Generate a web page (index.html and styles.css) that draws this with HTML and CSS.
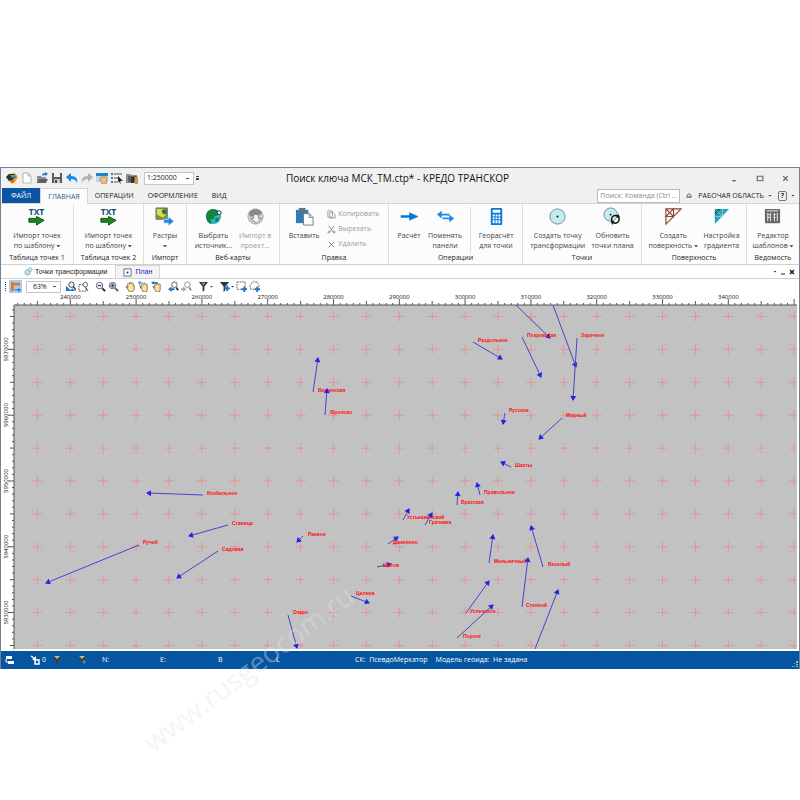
FILE: index.html
```
<!DOCTYPE html>
<html lang="ru">
    <head>
        <meta charset="UTF-8" />
        <meta name="viewport" content="width=device-width, initial-scale=1.0" />
        <title>Поиск ключа МСК_ТМ.ctp* - КРЕДО ТРАНСКОР</title>
        <link rel="stylesheet" href="styles.css">
    </head>
    <body>
        <div class="window">
            <header class="titlebar">
                <div class="quick">
                    <button class="tool" aria-label="Меню программы"><svg viewBox="0 0 12 12"><path d="M0 5l3-3 6-1 3 4-3 5-3 2-3-3z" fill="#f2a01d"/><path d="M0 5l3-3 5 0 2 3-4 3-3 1z" fill="#27343d"/><path d="M4 3h4l2 2-4 1z" fill="#4d9bb9"/><path d="M5 9l3-1-1 3z" fill="#d23b1c"/></svg></button>
                    <button class="tool" aria-label="Создать"><svg viewBox="0 0 12 12"><path d="M2 1h5l3 3v7H2zM7 1v3h3" fill="#fff" stroke="#b5b5b5"/></svg></button>
                    <button class="tool" aria-label="Открыть"><svg viewBox="0 0 12 12"><path d="M1 4h4l1 1h4v6H1z" fill="#8b8f91"/><path d="M3 7h9l-2 4H1z" fill="#5d6265"/><path d="M6 4c0-2 1-3 3-3V0l3 2-3 2V3c-1 0-2 0-3 1z" fill="#0c7bd8"/></svg></button>
                    <button class="tool" aria-label="Сохранить"><svg viewBox="0 0 12 12"><path d="M1 1h10v10H1z" fill="#555d61"/><path d="M3 1h6v4H3z" fill="#eef2f4"/><path d="M3 7h6v4H3z" fill="#c6cbce"/><path d="M4 8h2v3H4z" fill="#444"/></svg></button>
                    <button class="tool" aria-label="Отменить"><svg viewBox="0 0 12 12"><path d="M0 5l5-4v3c5 0 7 3 6 7-1-3-3-4-6-4v3z" fill="#1688e8"/></svg></button>
                    <button class="tool" aria-label="Вернуть"><svg viewBox="0 0 12 12"><path d="M12 5L7 1v3C2 4 0 7 1 11c1-3 3-4 6-4v3z" fill="#aeb3b6"/></svg></button>
                    <button class="tool" aria-label="Свойства"><svg viewBox="0 0 12 12"><path d="M0 1h12v9H0z" fill="#b9d9ef"/><path d="M0 1h12v3H0z" fill="#1c86ca"/><path d="M5 5h6v4l-1 3H6L4 8z" fill="#f3bd80" stroke="#a76e3a" stroke-width=".6"/></svg></button>
                    <button class="tool" aria-label="Список"><svg viewBox="0 0 12 12"><path d="M0 1h2v2H0zM0 5h2v2H0zM0 9h2v2H0z" fill="#1c86ca"/><path d="M3 2h8M3 6h5M3 10h4" stroke="#555"/><path d="M7 4l5 5H9l1 3-3-3z" fill="#222"/></svg></button>
                    <button class="tool" aria-label="Архив"><svg viewBox="0 0 12 12"><path d="M0 2h4l1 1h6v8H0z" fill="#8a8f92"/><path d="M2 4h9v6H2z" fill="#5c6266"/><path d="M5 5h3v6H5z" fill="#333"/><path d="M9 5h3v7H9z" fill="#cf9d38"/></svg></button>
                    <select class="scale" aria-label="Масштаб"><option>1:250000</option></select>
                    <span class="more"></span>
                </div>
                <h1>Поиск ключа МСК_ТМ.ctp* - КРЕДО ТРАНСКОР</h1>
                <div class="win-buttons">
                    <button aria-label="Свернуть"><svg viewBox="0 0 8 8"><path d="M3 6h3" stroke="#444"/></svg></button>
                    <button aria-label="Развернуть"><svg viewBox="0 0 8 8"><path d="M2 2h5v4H2z" fill="none" stroke="#666"/></svg></button>
                    <button aria-label="Закрыть"><svg viewBox="0 0 8 8"><path d="M2 2l4 4M6 2L2 6" stroke="#666"/></svg></button>
                </div>
            </header>

            <nav class="tabs">
                <button class="file">ФАЙЛ</button>
                <button class="active">ГЛАВНАЯ</button>
                <button>ОПЕРАЦИИ</button>
                <button>ОФОРМЛЕНИЕ</button>
                <button>ВИД</button>
                <div class="tabs-right">
                    <input type="text" placeholder="Поиск: Команда (Ctrl ..." aria-label="Поиск команды">
                    <svg class="pin" viewBox="0 0 6 6"><path d="M1 4V3l1-2h2l1 2v1zM0 4h6" fill="none" stroke="#777"/></svg>
                    <button class="area">РАБОЧАЯ ОБЛАСТЬ<i class="arrow"></i></button>
                    <button class="help"><b>?</b><i class="arrow"></i></button>
                </div>
            </nav>

            <div class="ribbon">
                <section class="group">
                    <div class="items">
                        <button class="big"><svg viewBox="0 0 20 20"><text x="10" y="8" class="txt">TXT</text><path d="M2 12h8v-2l8 4-8 5v-3H2z" fill="#1c8a1c" stroke="#0c5212"/></svg><span>Импорт точек<br>по шаблону <i class="arrow"></i></span></button>
                    </div>
                    <h2>Таблица точек 1</h2>
                </section>
                <section class="group">
                    <div class="items">
                        <button class="big"><svg viewBox="0 0 20 20"><text x="10" y="8" class="txt">TXT</text><path d="M2 12h8v-2l8 4-8 5v-3H2z" fill="#1c8a1c" stroke="#0c5212"/></svg><span>Импорт точек<br>по шаблону <i class="arrow"></i></span></button>
                    </div>
                    <h2>Таблица точек 2</h2>
                </section>
                <section class="group">
                    <div class="items">
                        <button class="big"><svg viewBox="0 0 20 20"><path d="M1 1h12v12H1z" fill="#6f9b3b" stroke="#678"/><path d="M2 2h7l3 6-4 3-6-3z" fill="#e7d74b"/><path d="M7 3h5v5L8 7z" fill="#2f6d45"/><path d="M9 13h5v-3l6 5-6 5v-3H9z" fill="#1f86ee" stroke="#fff" stroke-width=".6"/></svg><span>Растры<br><i class="arrow"></i></span></button>
                    </div>
                    <h2>Импорт</h2>
                </section>
                <section class="group">
                    <div class="items">
                        <button class="big"><svg viewBox="0 0 20 20"><circle cx="10" cy="10" r="8" fill="#26b5d8"/><path d="M3 6c3-5 9-5 12-1l-1 4-3 1-1 3-3 0 1 5c-5-1-7-7-5-12z" fill="#148534"/><path d="M12 12l4-1-1 4-3 1z" fill="#148534"/><circle cx="16" cy="6" r="2" fill="#fff" stroke="#222"/></svg><span>Выбрать<br>источник...</span></button>
                        <button class="big" disabled><svg viewBox="0 0 20 20"><circle cx="10" cy="10" r="8" fill="#d0d0d0" stroke="#a5a5a5"/><path d="M3 6c3-5 11-5 14 0l-4 4H4z" fill="#8a8a8a"/><path d="M8 8h5v4h3l-5 5-6-5h3z" fill="#f8f8f8" stroke="#888"/></svg><span>Импорт в<br>проект...</span></button>
                    </div>
                    <h2>Веб-карты</h2>
                </section>
                <section class="group">
                    <div class="items">
                        <button class="big"><svg viewBox="0 0 20 20"><path d="M1 3h13v14H1z" fill="#2f7db5"/><path d="M4 1h7v4H4z" fill="#66737b"/><path d="M9 7h6l4 4v8H9zM15 7v4h4" fill="#fff" stroke="#707b82"/></svg><span>Вставить</span></button>
                        <div class="stack">
                            <button disabled><svg viewBox="0 0 10 10"><path d="M1 1h5v7H1zM3 3h4l2 2v4H3z" fill="#fff" stroke="#999"/></svg>Копировать</button>
                            <button disabled><svg viewBox="0 0 10 10"><path d="M2 1l5 7M8 1L3 8" stroke="#888"/><circle cx="2" cy="8" r="1" fill="none" stroke="#888"/><circle cx="8" cy="8" r="1" fill="none" stroke="#888"/></svg>Вырезать</button>
                            <button disabled><svg viewBox="0 0 10 10"><path d="M2 2l6 6M8 2L2 8" stroke="#777"/></svg>Удалить</button>
                        </div>
                    </div>
                    <h2>Правка</h2>
                </section>
                <section class="group">
                    <div class="items">
                        <button class="big"><svg viewBox="0 0 20 20"><path d="M1 9h9V6l9 4-9 4v-3H1z" fill="#0878d8" stroke="#0878d8" stroke-width=".6"/></svg><span>Расчёт</span></button>
                        <button class="big"><svg viewBox="0 0 20 20"><path d="M1 8l5-4v3h8v2H6v3zM19 12l-5-4v3H7v2h7v3z" fill="#1688ec"/></svg><span>Поменять<br>панели</span></button>
                        <button class="big divided"><svg viewBox="0 0 20 20"><rect x="4" y="1" width="12" height="18" rx="1" fill="#0878d8"/><path d="M6 3h8v3H6zM6 8h2v2H6zM9 8h2v2H9zM12 8h2v2h-2zM6 11h2v2H6zM9 11h2v2H9zM12 11h2v2h-2zM6 14h2v3H6zM9 14h2v3H9zM12 14h2v3h-2z" fill="#fff"/></svg><span>Георасчёт<br>для точки</span></button>
                    </div>
                    <h2>Операции</h2>
                </section>
                <section class="group">
                    <div class="items">
                        <button class="big"><svg viewBox="0 0 20 20"><circle cx="10" cy="10" r="8" fill="#c3e9f1" stroke="#6d8b93"/><circle cx="10" cy="10" r="1" fill="#111"/></svg><span>Создать точку<br>трансформации</span></button>
                        <button class="big"><svg viewBox="0 0 20 20"><circle cx="8" cy="8" r="7" fill="#c3e9f1" stroke="#6d8b93"/><circle cx="8" cy="8" r="1" fill="#111"/><circle cx="13" cy="13" r="4" fill="none" stroke="#111" stroke-width="1.6"/><path d="M16 7l2 4h-4zM10 19l-2-4h4z" fill="#111"/></svg><span>Обновить<br>точки плана</span></button>
                    </div>
                    <h2>Точки</h2>
                </section>
                <section class="group">
                    <div class="items">
                        <button class="big"><svg viewBox="0 0 20 20"><path d="M2 2h16L2 18zM2 2l8 8V2L2 10h8" fill="none" stroke="#8a4a2c" stroke-width="1.2"/></svg><span>Создать<br>поверхность <i class="arrow"></i></span></button>
                        <button class="big"><svg viewBox="0 0 20 20"><path d="M3 2h15L3 18z" fill="#22a7b8"/><path d="M3 2h8L3 12z" fill="#0d7487"/><path d="M3 2l8 8V2L3 10h7" fill="none" stroke="#a8e4ea" stroke-width=".7"/></svg><span>Настройка<br>градиента</span></button>
                    </div>
                    <h2>Поверхность</h2>
                </section>
                <section class="group">
                    <div class="items">
                        <button class="big"><svg viewBox="0 0 20 20"><rect x="2" y="2" width="16" height="15" rx="1" fill="#666"/><path d="M4 4h12M5 6v9M8 6v9M12 6v9M15 6v9" stroke="#eee"/><path d="M5 8h2M5 11h2M11 8h2M11 11h2" stroke="#fff"/></svg><span>Редактор<br>шаблонов <i class="arrow"></i></span></button>
                    </div>
                    <h2>Ведомость</h2>
                </section>
            </div>

            <div class="docs">
                <button><svg viewBox="0 0 10 10"><circle cx="4" cy="6" r="3" fill="#bfe1e5" stroke="#8ab"/><circle cx="7" cy="3" r="2" fill="#d7eef0" stroke="#8ab"/></svg>Точки трансформации</button>
                <button class="active"><svg viewBox="0 0 10 10"><path d="M1 1h8v8H1z" fill="#fff" stroke="#456b9b"/><path d="M4 4h2v2H4z" fill="#234"/></svg>План</button>
                <div class="docs-right">
                    <i class="arrow"></i>
                    <svg viewBox="0 0 6 6"><path d="M1 5h4" stroke="#222"/></svg>
                    <svg viewBox="0 0 6 6"><path d="M1 1l4 4M5 1L1 5" stroke="#111" stroke-width="1.4"/></svg>
                </div>
            </div>

            <div class="toolbar">
                <span class="grip"></span>
                <button class="tool on" aria-label="Слои"><svg viewBox="0 0 12 12"><path d="M1 1h3v10H1z" fill="#e2761b"/><path d="M4 2h7v3H4zM5 8h3" fill="#e2761b"/><path d="M5 9h4V7l3 3-3 2v-2H5z" fill="#1c76cf"/></svg></button>
                <select class="zoom" aria-label="Увеличение"><option>63%</option></select>
                <button class="tool" aria-label="Показать всё"><svg viewBox="0 0 12 12"><path d="M1 5v6h10L8 8l-2 2-3-3z" fill="#1c76cf"/><circle cx="7" cy="4" r="3" fill="#e4f1f8" stroke="#444"/><path d="M9 6l3 4" stroke="#333" stroke-width="1.5"/></svg></button>
                <button class="tool" aria-label="Рамкой"><svg viewBox="0 0 12 12"><path d="M1 4h8v7H1z" fill="none" stroke="#444" stroke-dasharray="2 1"/><circle cx="8" cy="4" r="2.5" fill="#fff" stroke="#555"/><path d="M8 7l3 4" stroke="#333"/></svg></button>
                <button class="tool gap" aria-label="Уменьшить"><svg viewBox="0 0 12 12"><circle cx="5" cy="5" r="3.5" fill="#fff" stroke="#555"/><path d="M3 5h4" stroke="#33a" stroke-width="1.5"/><path d="M8 8l3 3" stroke="#222" stroke-width="2"/></svg></button>
                <button class="tool" aria-label="Увеличить"><svg viewBox="0 0 12 12"><circle cx="5" cy="5" r="3.5" fill="#b9cbd8" stroke="#666"/><path d="M3 5h4M5 3v4" stroke="#357" stroke-width="1.5"/><path d="M8 8l3 3" stroke="#555" stroke-width="2"/></svg></button>
                <button class="tool gap" aria-label="Рука"><svg viewBox="0 0 12 12"><path d="M1 6l2 1V3l1-1 1 1 1-2 1 2 1-1 1 1v2l1 0v4l-2 3H5z" fill="#ffe2a0" stroke="#5c4a25" stroke-width=".8"/></svg></button>
                <button class="tool" aria-label="Сдвиг"><svg viewBox="0 0 12 12"><path d="M2 6l2 1V4l1-1 1 1 1-2 1 2 1-1 1 1v6l-1 2H6z" fill="#ffe2a0" stroke="#5c4a25" stroke-width=".8"/><path d="M0 2h5M2 0v5" stroke="#1c76cf"/></svg></button>
                <button class="tool" aria-label="Назад"><svg viewBox="0 0 12 12"><path d="M2 6l2 1V4l1-1 1 1 1-2 1 2 1-1 1 1v6l-1 2H6z" fill="#ffe2a0" stroke="#5c4a25" stroke-width=".8"/><path d="M0 2l3-2v1h4v2H3v1z" fill="#1c76cf"/></svg></button>
                <button class="tool gap" aria-label="Предыдущий вид"><svg viewBox="0 0 12 12"><circle cx="7" cy="4" r="3" fill="#fff" stroke="#555"/><path d="M9 7l2 3" stroke="#333" stroke-width="2"/><path d="M0 9l4-3v2h3v2H4v2z" fill="#1c76cf"/></svg></button>
                <button class="tool" aria-label="Следующий вид"><svg viewBox="0 0 12 12"><circle cx="7" cy="4" r="3" fill="#fff" stroke="#888"/><path d="M9 7l2 3" stroke="#888" stroke-width="2"/><path d="M6 9L2 6v2H0v2h2v2z" fill="#aaa"/></svg></button>
                <button class="tool wide gap" aria-label="Фильтр"><svg viewBox="0 0 12 12"><path d="M1 1h10L7 6v4l-2 2V6z" fill="#333"/><path d="M4 2h4L6 5z" fill="#999"/></svg><i class="arrow"></i></button>
                <button class="tool wide gap" aria-label="Добавить фильтр"><svg viewBox="0 0 12 12"><path d="M1 1h10L7 6v4l-2 2V6z" fill="#333"/><path d="M9 5v6M6 8h6" stroke="#1c76cf" stroke-width="2"/></svg><i class="arrow"></i></button>
                <button class="tool" aria-label="Выделить рамкой"><svg viewBox="0 0 12 12"><path d="M1 1h9v8H1z" fill="none" stroke="#555" stroke-dasharray="2 1"/><path d="M9 6v6M6 9h6" stroke="#1c76cf" stroke-width="2"/></svg></button>
                <button class="tool" aria-label="Выделить контуром"><svg viewBox="0 0 12 12"><path d="M2 9L1 5l3-4h5l2 4-1 4z" fill="none" stroke="#555" stroke-dasharray="2 1"/><path d="M9 6v6M6 9h6" stroke="#1c76cf" stroke-width="2"/></svg></button>
            </div>

            <svg class="plan" id="plan"></svg>

            <footer class="status">
                <svg viewBox="0 0 10 10"><path d="M1 1h6v3H1zM3 6h6v3H3z" fill="#fff"/><path d="M1 4v3h2" fill="none" stroke="#fff"/></svg>
                <span class="count"><svg viewBox="0 0 10 10"><path d="M1 1l4 3M5 5h4v4H5z" fill="none" stroke="#fff" stroke-width="1.5"/><path d="M2 5h4V1z" fill="#fff"/></svg>0</span>
                <svg viewBox="0 0 10 10"><path d="M1 1h8L6 5v4H4V5z" fill="#3d3d35"/><path d="M2 1h6L5 4z" fill="#c9b98a"/></svg>
                <svg viewBox="0 0 10 10"><path d="M1 1h8L6 5v4H4V5z" fill="#3d3d35"/><path d="M2 1h6L5 4z" fill="#c9b98a"/><path d="M7 5v4M5 7h4" stroke="#2a9bff"/></svg>
                <span class="coord">N:</span>
                <span class="coord">E:</span>
                <span class="coord">B</span>
                <span class="coord last">L</span>
                <span class="crs">СК:&nbsp; ПсевдоМеркатор</span>
                <span>Модель геоида:&nbsp; Не задана</span>
                <svg class="resize" viewBox="0 0 6 6"><path d="M4 0h2v2H4zM2 2h1v1H2zM4 3h2v1H4zM0 5h1v1H0zM2 5h1v1H2zM4 5h2v1H4z" fill="#9fc0dd"/></svg>
            </footer>
            <div class="watermark">www.rusgeocom.ru</div>
        </div>

        <script>
            var plan = document.getElementById("plan");
            var left = 13;
            var top0 = 11;
            var step = 65.8 / 10;

            // x1, y1, x2, y2, name, name x, name y
            var points = [
                [502, 0, 536, 33],
                [508, 32, 527, 72, "Покровская", 513, 30],
                [539, 0, 562, 62],
                [563, 33, 559, 95, "Заречное", 567, 30],
                [459, 37, 488, 54, "Раздольное", 464, 35],
                [299, 87, 304, 53, "Вешенская", 304, 85],
                [311, 110, 313, 84, "Фролово", 316, 107],
                [491, 108, 489, 119, "Русское", 495, 105],
                [548, 113, 525, 134, "Мирный", 552, 110],
                [497, 162, 487, 157, "Шахты", 501, 160],
                [466, 190, 463, 178, "Привольное", 470, 187],
                [443, 200, 444, 187, "Братская", 447, 197],
                [389, 215, 395, 204, "Устькаменский", 393, 212],
                [411, 220, 418, 208, "Грачевка", 415, 217],
                [374, 239, 384, 232, "Данилино", 379, 237],
                [363, 262, 377, 259, "Шатов", 369, 260],
                [289, 231, 283, 237, "Раевое", 294, 229],
                [337, 291, 355, 298, "Целина", 342, 288],
                [274, 310, 283, 343, "Озеро", 279, 307],
                [475, 258, 479, 230, "Мельничный", 480, 256],
                [529, 262, 517, 221, "Веселый", 534, 259],
                [508, 302, 514, 253, "Степной", 512, 300],
                [452, 308, 475, 276, "Успенское", 456, 306],
                [443, 333, 479, 300, "Пороги", 449, 331],
                [521, 344, 544, 285],
                [189, 190, 133, 188, "Изобильное", 193, 188],
                [214, 220, 175, 231, "Станица", 218, 218],
                [204, 246, 163, 273, "Садовая", 208, 244],
                [125, 240, 32, 278, "Ручей", 129, 237]
            ];

            function draw() {
                var w = plan.clientWidth - left - 2;
                var h = plan.clientHeight - top0 - 2;
                var html = '<rect class="ground" width="' + w + '" height="' + h + '"/>';
                var ticks = "";
                var crosses = "";
                var i, j, x, y, len;

                // top ruler, 1000 m per tick
                for (i = -8; (x = 56.3 + i * step) < w; i++) {
                    if (x < 0) continue;
                    len = i % 10 == 0 ? 6 : i % 5 == 0 ? 4 : 2;
                    ticks += "M" + x + " 0v-" + len;
                    if (i % 10 == 0 && x < w - 20) {
                        html += '<text class="num" x="' + x + '" y="-6">' + (240000 + i * 1000) + "</text>";
                    }
                }
                // left ruler
                for (i = -6; (y = 44.4 + i * step) < h; i++) {
                    len = i % 10 == 0 ? 6 : i % 5 == 0 ? 4 : 2;
                    ticks += "M0 " + y + "h-" + len;
                    if (i % 10 == 0) {
                        html += '<text class="num" transform="translate(-6 ' + y + ') rotate(-90)">' + (5970000 - i * 1000) + "</text>";
                    }
                }
                for (i = -5; (x = 56.3 + i * step) < w; i += 5) {
                    for (j = -5; (y = 44.4 + j * step) < h; j += 5) {
                        crosses += "M" + (x - 5) + " " + y + "H" + Math.min(x + 5, w) + "M" + x + " " + (y - 5) + "V" + Math.min(y + 5, h);
                    }
                }
                html += '<path class="ticks" d="' + ticks + 'M0 0H' + w + 'M0 0V' + h + '"/>';
                html += '<path class="crosses" d="' + crosses + '"/>';

                points.forEach(function (p) {
                    var angle = Math.atan2(p[3] - p[1], p[2] - p[0]) * 180 / Math.PI;
                    html += '<path class="vector" d="M' + p[0] + " " + p[1] + "L" + p[2] + " " + p[3] + '"/>';
                    html += '<path class="head" transform="translate(' + p[2] + " " + p[3] + ") rotate(" + angle + ')" d="M1 0l-5-3v6z"/>';
                    if (p[4]) {
                        html += '<text class="name" x="' + p[5] + '" y="' + (p[6] + 2) + '">' + p[4] + "</text>";
                    }
                });
                plan.innerHTML = '<g transform="translate(' + left + " " + top0 + ')">' + html + "</g>";
            }

            draw();
            window.onresize = draw;
        </script>
    </body>
</html>
```
FILE: styles.css
```
* {
    margin: 0;
    padding: 0;
    box-sizing: border-box;
}
body {
    padding: 167px 0 100px;
    background-color: #fff;
    color: #222;
    font-family: "Open Sans", "Noto Sans", sans-serif;
    font-size: 7px;
    line-height: 10px;
    overflow-x: hidden;
}
button,
input,
select {
    border: none;
    background: none;
    color: inherit;
    font: inherit;
}
svg {
    display: block;
    flex: none;
}
.window {
    position: relative;
    border: 1px solid #6c8494;
    border-bottom: none;
    background-color: #fff;
}
.arrow {
    display: inline-block;
    width: 4px;
    height: 2px;
    background-color: #333;
    clip-path: polygon(0 0, 100% 0, 50% 100%);
    vertical-align: middle;
}

/* title */
.titlebar {
    display: grid;
    grid-template-columns: 1fr auto 1fr;
    align-items: center;
    height: 20px;
    padding: 0 9px 0 4px;
    background-color: #f0f0f0;
}
.titlebar h1 {
    color: #111;
    font-size: 10px;
    font-weight: 400;
    line-height: 14px;
}
.quick {
    display: flex;
    align-items: center;
    gap: 2px;
}
.tool {
    display: flex;
    align-items: center;
    justify-content: center;
    width: 13px;
    height: 13px;
}
.tool svg {
    width: 11px;
    height: 11px;
}
.quick .tool svg {
    width: 12px;
    height: 12px;
}
.scale,
.zoom {
    appearance: none;
    height: 13px;
    padding: 0 4px;
    border: 1px solid #c6c6c6;
    background: #fff linear-gradient(#555, #555) no-repeat right 4px center / 3px 1px;
}
.scale {
    width: 50px;
    margin-left: 4px;
    padding-left: 2px;
}
.more {
    width: 3px;
    height: 4px;
    border-top: 1px solid #444;
    border-bottom: 2px solid #444;
}
.win-buttons {
    display: flex;
    justify-content: flex-end;
    gap: 17px;
}
.win-buttons svg {
    width: 9px;
    height: 9px;
}

/* ribbon tabs */
.tabs {
    display: flex;
    align-items: stretch;
    height: 16px;
    padding-left: 1px;
    background-color: #f0f0f0;
    border-bottom: 1px solid #d5d5d5;
}
.tabs > button {
    padding: 1px 7px 0;
}
.tabs > .file {
    padding: 0 9px;
    background-color: #0a56a4;
    color: #fff;
}
.tabs > .active {
    margin-bottom: -1px;
    padding: 0 7px;
    border: 1px solid #d5d5d5;
    border-bottom: none;
    background-color: #fcfcfc;
    color: #2a5a92;
}
.tabs-right {
    display: flex;
    align-items: center;
    gap: 6px;
    margin-left: auto;
    padding-right: 4px;
}
.tabs-right input {
    width: 83px;
    height: 14px;
    padding: 0 2px;
    border: 1px solid #bbb;
    background-color: #fff;
}
.tabs-right input::placeholder {
    color: #888;
}
.pin {
    width: 6px;
    height: 6px;
}
.area,
.help {
    display: flex;
    align-items: center;
    gap: 4px;
}
.help b {
    width: 9px;
    border: 1px solid #777;
    border-radius: 2px;
    line-height: 8px;
}

/* ribbon */
.ribbon {
    display: grid;
    grid-template-columns: 73fr 70fr 43fr 93fr 109fr 134fr 119fr 105fr 52fr;
    height: 61px;
    background-color: #fcfcfc;
    border-bottom: 1px solid #d0d0d0;
}
.group {
    display: flex;
    flex-direction: column;
    min-width: 0;
    padding: 3px 1px 1px;
    border-right: 1px solid #dedede;
}
.group:last-child {
    border-right: none;
}
.group h2 {
    font-size: 7px;
    font-weight: 400;
    text-align: center;
}
.items {
    display: flex;
    flex: 1;
    justify-content: space-evenly;
}
.big {
    display: flex;
    flex-direction: column;
    align-items: center;
    gap: 5px;
    color: #444;
    white-space: nowrap;
}
.big svg {
    width: 19px;
    height: 19px;
}
.big:disabled,
.stack button:disabled {
    color: #999;
}
.txt {
    fill: #0d4a76;
    font-size: 9px;
    font-weight: 700;
    text-anchor: middle;
}
.stack {
    display: flex;
    flex-direction: column;
    gap: 5px;
    padding-top: 2px;
}
.stack button {
    display: flex;
    align-items: center;
    gap: 2px;
}
.stack svg {
    width: 9px;
    height: 9px;
}
.divided {
    padding-left: 8px;
    border-left: 1px solid #dedede;
}

/* document tabs */
.docs {
    display: flex;
    height: 14px;
    padding-left: 18px;
    border-bottom: 1px solid #d0d0d0;
    font-family: "Liberation Sans", sans-serif;
}
.docs > button {
    display: flex;
    align-items: center;
    gap: 2px;
    padding: 0 8px 0 5px;
}
.docs > .active {
    padding: 0 7px;
    gap: 3px;
    border: 1px solid #d5d5d5;
    border-bottom: none;
    background-color: #f3f3f3;
    color: #2222d0;
}
.docs svg {
    width: 9px;
    height: 9px;
}
.docs-right {
    display: flex;
    align-items: center;
    gap: 3px;
    margin-left: auto;
    padding-right: 4px;
}
.docs-right svg {
    width: 6px;
    height: 6px;
}

/* plan toolbar */
.toolbar {
    display: flex;
    align-items: center;
    height: 15px;
    padding-left: 4px;
}
.grip {
    width: 1px;
    height: 9px;
    margin-right: 3px;
    border-left: 1px dotted #333;
}
.on {
    background-color: #a9cdf0;
}
.zoom {
    width: 35px;
    height: 12px;
    margin: 0 3px 0 4px;
    padding-left: 6px;
}
.gap {
    margin-left: 4px;
}
.wide {
    width: 17px;
    gap: 1px;
}

/* plan */
.plan {
    width: 100%;
    height: 357px;
}
.ground {
    fill: #c2c2c2;
}
.ticks {
    fill: none;
    stroke: #555;
}
.crosses {
    fill: none;
    stroke: #f27c7c;
    stroke-opacity: 0.6;
}
.vector {
    fill: none;
    stroke: #4a42cc;
}
.head {
    fill: #2a22e0;
}
.num {
    fill: #111;
    font-size: 6px;
    text-anchor: middle;
}
.name {
    fill: #ff1010;
    font-family: "Liberation Sans", sans-serif;
    font-size: 5px;
    font-weight: 700;
}

/* status bar */
.status {
    display: flex;
    align-items: center;
    height: 18px;
    padding: 0 1px 0 4px;
    background-color: #0555a0;
    color: #fff;
}
.status svg {
    width: 10px;
    height: 10px;
    margin-right: 15px;
}
.count {
    display: flex;
    margin-right: 6px;
}
.status .count svg {
    margin-right: 2px;
}
.coord {
    width: 58px;
}
.last {
    width: 79px;
}
.crs {
    margin-right: 8px;
}
.status .resize {
    width: 6px;
    height: 6px;
    margin: 8px 0 0 auto;
}

.watermark {
    position: absolute;
    top: 480px;
    left: 120px;
    color: rgba(228, 228, 228, 0.4);
    font-size: 28px;
    line-height: 40px;
    transform: rotate(-37deg);
    pointer-events: none;
}
```
